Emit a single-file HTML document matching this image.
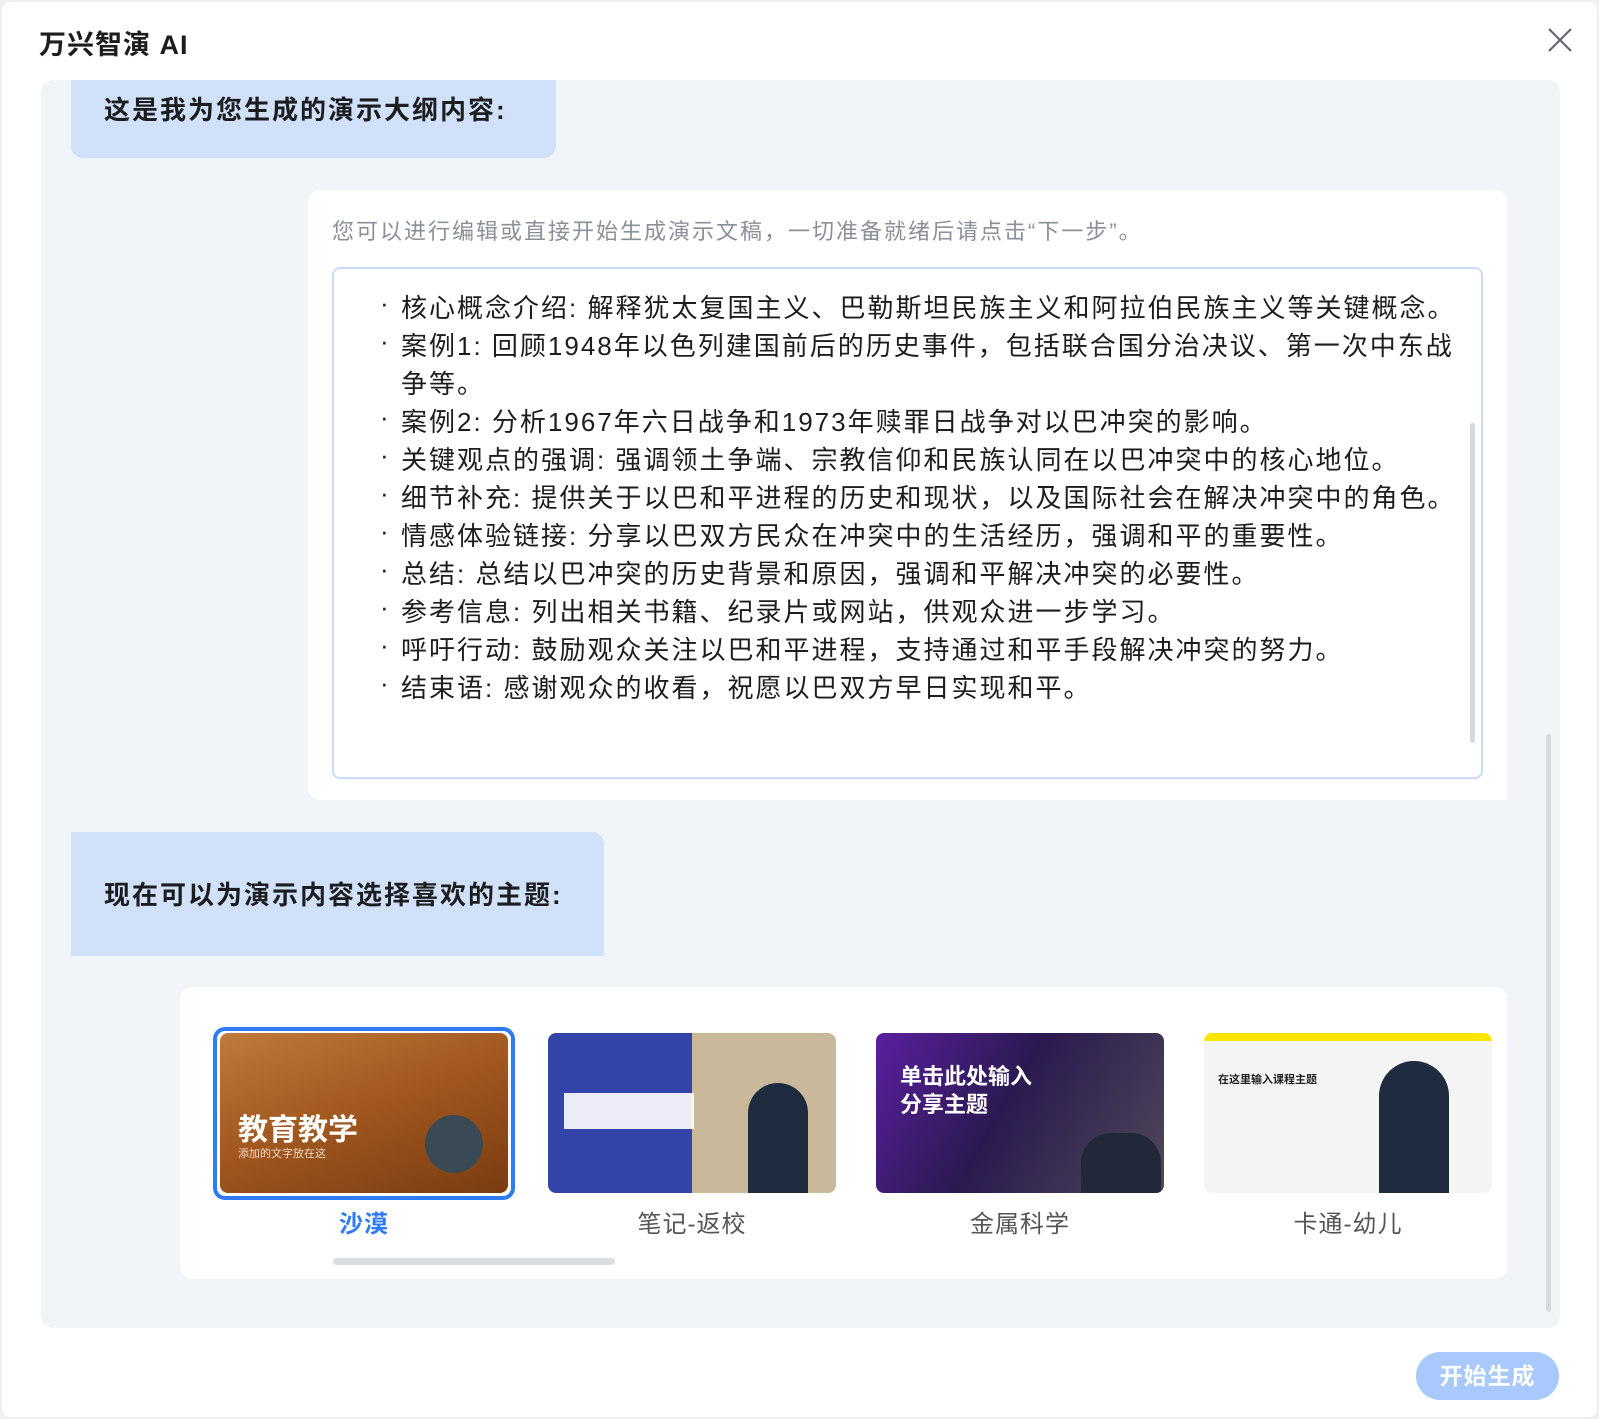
<!DOCTYPE html>
<html><head><meta charset="utf-8"><style>
*{margin:0;padding:0;box-sizing:border-box}
body{width:1599px;height:1419px;background:#f0f0f0;font-family:"Liberation Sans","Noto Sans CJK SC",sans-serif;position:relative;overflow:hidden}
.dlg{position:absolute;left:2px;top:2px;width:1595px;height:1415px;background:#fff;border-radius:8px}
.abs{position:absolute}
.title{left:39px;top:23px;font-size:27px;font-weight:bold;color:#1d1d1f;letter-spacing:1px}
.panel{left:41px;top:80px;width:1519px;height:1248px;background:#f1f4f9;border-radius:12px}
.bub{background:#d1e1f9;font-weight:bold;font-size:26px;letter-spacing:2px;color:#1d1d1f;border-radius:0 0 12px 12px}
.card{background:#fff;border-radius:12px}
.line{position:absolute;left:401px;font-size:26px;letter-spacing:2px;color:#1d1d1f;white-space:nowrap}
.dot{position:absolute;left:380px;font-size:26px;color:#1d1d1f}
.th{position:absolute;top:1033px;width:288px;height:160px;border-radius:8px;overflow:hidden}
.lbl{position:absolute;top:1204px;font-size:24px;letter-spacing:1px;color:#555;width:288px;text-align:center}
</style></head><body>
<div class="dlg"></div>
<div class="abs title">万兴智演 AI</div>
<svg class="abs" style="left:1548px;top:28px" width="24" height="24"><path d="M1 1L23 23M23 1L1 23" stroke="#5f6368" stroke-width="2"/></svg>
<div class="abs panel"></div>
<div class="abs bub" style="left:71px;top:80px;width:485px;height:78px;padding:10px 0 0 33px">这是我为您生成的演示大纲内容:</div>
<div class="abs card" style="left:308px;top:190px;width:1199px;height:610px;border-radius:12px 12px 0 12px"></div>
<div class="abs" style="left:332px;top:214px;font-size:22px;letter-spacing:2px;color:#8a8f99">您可以进行编辑或直接开始生成演示文稿，一切准备就绪后请点击“下一步”。</div>
<div class="abs" style="left:332px;top:267px;width:1151px;height:512px;border:2px solid #c9dbf7;border-radius:8px;background:#fff"></div>
<div class="abs" style="left:1470px;top:423px;width:5px;height:320px;background:#d6d8dc;border-radius:3px"></div>
<div class="dot" style="top:288px">·</div><div class="line" style="top:288px">核心概念介绍: 解释犹太复国主义、巴勒斯坦民族主义和阿拉伯民族主义等关键概念。</div>
<div class="dot" style="top:326px">·</div><div class="line" style="top:326px">案例1: 回顾1948年以色列建国前后的历史事件，包括联合国分治决议、第一次中东战</div>
<div class="line" style="top:364px">争等。</div>
<div class="dot" style="top:402px">·</div><div class="line" style="top:402px">案例2: 分析1967年六日战争和1973年赎罪日战争对以巴冲突的影响。</div>
<div class="dot" style="top:440px">·</div><div class="line" style="top:440px">关键观点的强调: 强调领土争端、宗教信仰和民族认同在以巴冲突中的核心地位。</div>
<div class="dot" style="top:478px">·</div><div class="line" style="top:478px">细节补充: 提供关于以巴和平进程的历史和现状，以及国际社会在解决冲突中的角色。</div>
<div class="dot" style="top:516px">·</div><div class="line" style="top:516px">情感体验链接: 分享以巴双方民众在冲突中的生活经历，强调和平的重要性。</div>
<div class="dot" style="top:554px">·</div><div class="line" style="top:554px">总结: 总结以巴冲突的历史背景和原因，强调和平解决冲突的必要性。</div>
<div class="dot" style="top:592px">·</div><div class="line" style="top:592px">参考信息: 列出相关书籍、纪录片或网站，供观众进一步学习。</div>
<div class="dot" style="top:630px">·</div><div class="line" style="top:630px">呼吁行动: 鼓励观众关注以巴和平进程，支持通过和平手段解决冲突的努力。</div>
<div class="dot" style="top:668px">·</div><div class="line" style="top:668px">结束语: 感谢观众的收看，祝愿以巴双方早日实现和平。</div>
<div class="abs bub" style="left:71px;top:832px;width:533px;height:124px;padding:43px 0 0 33px;border-radius:0 12px 0 0">现在可以为演示内容选择喜欢的主题:</div>
<div class="abs card" style="left:180px;top:987px;width:1327px;height:292px"></div>
<div class="abs" style="left:213px;top:1027px;width:302px;height:173px;border:4px solid #2f7bf5;border-radius:12px"></div>
<div class="th" style="left:220px;background:linear-gradient(160deg,#c07a3a,#a0561e 50%,#7a3c12)">
<div class="abs" style="left:18px;top:72px;font-size:30px;font-weight:bold;color:#fff">教育教学</div>
<div class="abs" style="left:18px;top:112px;font-size:11px;color:#f3dcc6">添加的文字放在这</div>
<div class="abs" style="left:205px;top:82px;width:58px;height:58px;border-radius:50%;background:#3a4a55"></div></div>
<div class="th" style="left:548px;background:linear-gradient(90deg,#3344a8 50%,#c9b89a 50%)">
<div class="abs" style="left:16px;top:60px;width:130px;height:36px;background:#fff;opacity:.9"></div>
<div class="abs" style="left:200px;top:50px;width:60px;height:110px;background:#1f2b3e;border-radius:30px 30px 0 0"></div></div>
<div class="th" style="left:876px;background:linear-gradient(120deg,#5a1fa0,#2a1a50 45%,#504858)">
<div class="abs" style="left:24px;top:30px;font-size:22px;font-weight:bold;color:#fff;line-height:28px">单击此处输入<br>分享主题</div>
<div class="abs" style="left:205px;top:100px;width:80px;height:60px;background:#22283a;border-radius:30px 30px 0 0"></div></div>
<div class="th" style="left:1204px;background:#f4f4f4;border-top:8px solid #ffe600">
<div class="abs" style="left:14px;top:30px;font-size:11px;font-weight:bold;color:#222">在这里输入课程主题</div>
<div class="abs" style="left:175px;top:20px;width:70px;height:140px;background:#1f2b3e;border-radius:35px 35px 0 0"></div></div>
<div class="lbl" style="left:220px;color:#2f7bf5;font-weight:bold">沙漠</div>
<div class="lbl" style="left:548px">笔记-返校</div>
<div class="lbl" style="left:876px">金属科学</div>
<div class="lbl" style="left:1204px">卡通-幼儿</div>
<div class="abs" style="left:333px;top:1258px;width:282px;height:7px;background:#dcdde0;border-radius:4px"></div>
<div class="abs" style="left:1546px;top:734px;width:5px;height:578px;background:#d6d8dc;border-radius:3px"></div>
<div class="abs" style="left:1416px;top:1352px;width:143px;height:48px;background:#a9c8fb;border-radius:24px;color:#fff;font-weight:bold;font-size:23px;letter-spacing:1px;text-align:center;line-height:48px">开始生成</div>
</body></html>
